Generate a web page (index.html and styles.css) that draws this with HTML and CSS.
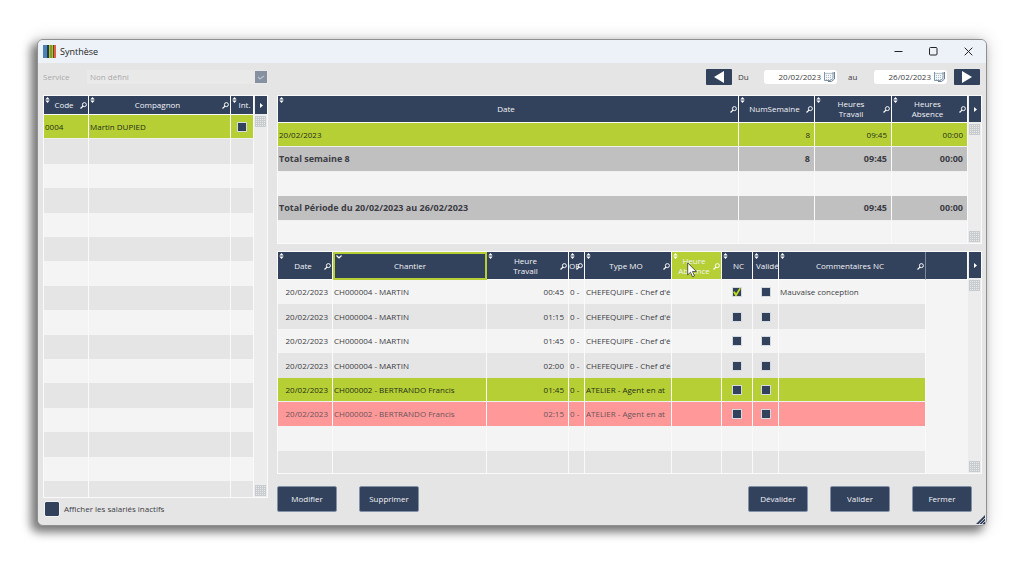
FILE: index.html
```html
<!DOCTYPE html>
<html lang="fr">
<head>
<meta charset="utf-8">
<title>Synthèse</title>
<link rel="stylesheet" href="styles.css">
</head>
<body>
<svg class="defs" aria-hidden="true">
  <symbol id="sort" viewBox="0 0 5 7"><path d="M2.5 0 5 3H0zM2.5 7 0 4h5z" fill="#fff"/></symbol>
  <symbol id="down" viewBox="0 0 6 4"><path d="M.5.5 3 3 5.5.5" fill="none" stroke="#fff" stroke-width="1.2"/></symbol>
  <symbol id="find" viewBox="0 0 8 8"><circle cx="5" cy="3" r="2.3" fill="none" stroke="#fff" stroke-width="1.1"/><path d="M3.4 4.7.6 7.4" stroke="#fff" stroke-width="1.4"/></symbol>
  <symbol id="cal" viewBox="0 0 11 11"><path d="M.5 1v8.500h6l2.500-2V1" fill="#f3f6f9" stroke="#8295a6"/><path d="M.5 2.500h9" stroke="#8295a6" stroke-dasharray="1 1"/><path d="M2.500 4v5M4.500 4v5M6.500 4v5" stroke="#a9bccb" stroke-dasharray="1 1"/><path d="M10.500 1v7l-3 2.500H4" fill="none" stroke="#6f8193"/></symbol>
  <symbol id="grip" viewBox="0 0 11 11"><path d="M0 0h11v11H0z" fill="#c9cccf"/><path d="M1 1.500h9M1 3.500h9M1 5.500h9M1 7.500h9M1 9.500h9" stroke="#e9e9e9" stroke-dasharray="1 1"/></symbol>
</svg>

<div class="window">
  <header class="titlebar">
    <svg class="logo" viewBox="0 0 13 13"><path d="M0 0h5v13H0z" fill="#4a82b8"/><path d="M4 0h2v13H4z" fill="#26384a"/><path d="M6 0h4v13H6z" fill="#a9c52f"/><path d="M7.500 0h1v13h-1z" fill="#5c7426"/><path d="M10 0h1v13h-1z" fill="#5b4a2c"/><path d="M11 0h2v13h-2z" fill="#e2604c"/></svg>
    <h1 class="title">Synthèse</h1>
    <button class="win-btn" aria-label="Réduire"><svg viewBox="0 0 9 9"><path d="M.5 4.500h8" stroke="#222"/></svg></button>
    <button class="win-btn" aria-label="Agrandir"><svg viewBox="0 0 9 9"><rect x=".5" y=".5" width="7.500" height="7.500" rx="1" fill="none" stroke="#222"/></svg></button>
    <button class="win-btn" aria-label="Fermer la fenêtre"><svg viewBox="0 0 9 9"><path d="m.7.7 7.600 7.600M8.300.7.7 8.300" stroke="#222"/></svg></button>
  </header>

  <main class="client">
    <section class="side">
      <div class="service">
        <label for="service">Service</label>
        <div class="select-wrap">
          <select id="service" disabled><option>Non défini</option></select>
          <svg class="select-arrow" viewBox="0 0 12 12"><path d="M0 0h12v12H0z" fill="#8591a1"/><path d="m3 6 2 2 4-3" fill="none" stroke="#b9c1ca" stroke-width="1.300"/></svg>
        </div>
      </div>
      <div class="panel">
        <table class="people">
          <colgroup><col class="c-code"><col><col class="c-int"></colgroup>
          <thead><tr>
            <th><svg class="sort"><use href="#sort"/></svg>Code<svg class="find"><use href="#find"/></svg></th>
            <th><svg class="sort"><use href="#sort"/></svg>Compagnon<svg class="find"><use href="#find"/></svg></th>
            <th class="tight-end"><svg class="sort"><use href="#sort"/></svg>Int.</th>
          </tr></thead>
          <tbody>
            <tr class="selected"><td>0004</td><td>Martin DUPIED</td><td class="mid"><input type="checkbox" class="box" aria-label="Intérimaire"></td></tr>
            <tr><td></td><td></td><td></td></tr><tr><td></td><td></td><td></td></tr>
            <tr><td></td><td></td><td></td></tr><tr><td></td><td></td><td></td></tr>
            <tr><td></td><td></td><td></td></tr><tr><td></td><td></td><td></td></tr>
            <tr><td></td><td></td><td></td></tr><tr><td></td><td></td><td></td></tr>
            <tr><td></td><td></td><td></td></tr><tr><td></td><td></td><td></td></tr>
            <tr><td></td><td></td><td></td></tr><tr><td></td><td></td><td></td></tr>
            <tr><td></td><td></td><td></td></tr><tr><td></td><td></td><td></td></tr>
            <tr class="cut"><td></td><td></td><td></td></tr>
          </tbody>
        </table>
        <div class="scroll">
          <button class="corner small" aria-label="Colonnes"><svg viewBox="0 0 3 5"><path d="M0 0 3 2.500 0 5z" fill="#fff"/></svg></button>
          <svg class="grip"><use href="#grip"/></svg><svg class="grip last"><use href="#grip"/></svg>
        </div>
      </div>
      <label class="inactive"><input type="checkbox" class="big-box">Afficher les salariés inactifs</label>
    </section>

    <section class="content">
      <div class="period">
        <button class="step" aria-label="Période précédente"><svg viewBox="0 0 10 12"><path d="M10 0v12L0 6z" fill="#fff"/></svg></button>
        <label for="from" class="du">Du</label>
        <div class="date"><input id="from" type="text" value="20/02/2023"><svg><use href="#cal"/></svg></div>
        <label for="to" class="au">au</label>
        <div class="date"><input id="to" type="text" value="26/02/2023"><svg><use href="#cal"/></svg></div>
        <button class="step next" aria-label="Période suivante"><svg viewBox="0 0 10 12"><path d="M0 0v12l10-6z" fill="#fff"/></svg></button>
      </div>

      <div class="panel">
        <table class="totals">
          <colgroup><col><col class="c-week"><col class="c-hours"><col class="c-week"></colgroup>
          <thead><tr>
            <th><svg class="sort"><use href="#sort"/></svg>Date<svg class="find"><use href="#find"/></svg></th>
            <th><svg class="sort"><use href="#sort"/></svg>NumSemaine<svg class="find"><use href="#find"/></svg></th>
            <th><svg class="sort"><use href="#sort"/></svg>Heures<br>Travail<svg class="find"><use href="#find"/></svg></th>
            <th><svg class="sort"><use href="#sort"/></svg>Heures<br>Absence<svg class="find"><use href="#find"/></svg></th>
          </tr></thead>
          <tbody>
            <tr class="selected"><td>20/02/2023</td><td class="num">8</td><td class="num">09:45</td><td class="num">00:00</td></tr>
            <tr class="sum"><td>Total semaine 8</td><td class="num">8</td><td class="num">09:45</td><td class="num">00:00</td></tr>
            <tr class="light"><td></td><td></td><td></td><td></td></tr>
            <tr class="sum"><td>Total Période du 20/02/2023 au 26/02/2023</td><td></td><td class="num">09:45</td><td class="num">00:00</td></tr>
            <tr class="light cut"><td></td><td></td><td></td><td></td></tr>
          </tbody>
        </table>
        <div class="scroll">
          <button class="corner" aria-label="Colonnes"><svg viewBox="0 0 3 5"><path d="M0 0 3 2.500 0 5z" fill="#fff"/></svg></button>
          <svg class="grip"><use href="#grip"/></svg><svg class="grip last"><use href="#grip"/></svg>
        </div>
      </div>

      <div class="panel">
        <table class="details">
          <colgroup><col class="c-date"><col class="c-site"><col class="c-hour"><col class="c-of"><col class="c-type"><col class="c-abs"><col class="c-nc"><col class="c-ok"><col><col class="c-rest"></colgroup>
          <thead><tr>
            <th><svg class="sort"><use href="#sort"/></svg>Date<svg class="find"><use href="#find"/></svg></th>
            <th class="focused"><svg class="down"><use href="#down"/></svg>Chantier</th>
            <th><svg class="sort"><use href="#sort"/></svg>Heure<br>Travail<svg class="find"><use href="#find"/></svg></th>
            <th class="tight"><svg class="sort"><use href="#sort"/></svg>OF<svg class="find"><use href="#find"/></svg></th>
            <th><svg class="sort"><use href="#sort"/></svg>Type MO<svg class="find"><use href="#find"/></svg></th>
            <th class="hovered"><svg class="sort"><use href="#sort"/></svg>Heure<br>Absence<svg class="find"><use href="#find"/></svg>
              <svg class="cursor" viewBox="0 0 10 16"><path d="M.7.9v12l2.800-2.600 2 4.500 2-.9-2-4.400h3.800z" fill="#fff" stroke="#333" stroke-width=".8"/></svg></th>
            <th class="tight-end"><svg class="sort"><use href="#sort"/></svg>NC</th>
            <th class="tight-end"><svg class="sort"><use href="#sort"/></svg>Validé</th>
            <th><svg class="sort"><use href="#sort"/></svg>Commentaires NC<svg class="find"><use href="#find"/></svg></th>
            <th></th>
          </tr></thead>
          <tbody>
            <tr><td class="num">20/02/2023</td><td>CH000004 - MARTIN</td><td class="num">00:45</td><td>0 -</td><td>CHEFEQUIPE - Chef d'é</td><td></td><td class="mid"><input type="checkbox" class="box" aria-label="NC" checked></td><td class="mid"><input type="checkbox" class="box" aria-label="Validé"></td><td>Mauvaise conception</td><td></td></tr>
            <tr><td class="num">20/02/2023</td><td>CH000004 - MARTIN</td><td class="num">01:15</td><td>0 -</td><td>CHEFEQUIPE - Chef d'é</td><td></td><td class="mid"><input type="checkbox" class="box" aria-label="NC"></td><td class="mid"><input type="checkbox" class="box" aria-label="Validé"></td><td></td><td></td></tr>
            <tr><td class="num">20/02/2023</td><td>CH000004 - MARTIN</td><td class="num">01:45</td><td>0 -</td><td>CHEFEQUIPE - Chef d'é</td><td></td><td class="mid"><input type="checkbox" class="box" aria-label="NC"></td><td class="mid"><input type="checkbox" class="box" aria-label="Validé"></td><td></td><td></td></tr>
            <tr><td class="num">20/02/2023</td><td>CH000004 - MARTIN</td><td class="num">02:00</td><td>0 -</td><td>CHEFEQUIPE - Chef d'é</td><td></td><td class="mid"><input type="checkbox" class="box" aria-label="NC"></td><td class="mid"><input type="checkbox" class="box" aria-label="Validé"></td><td></td><td></td></tr>
            <tr class="selected"><td class="num">20/02/2023</td><td>CH000002 - BERTRANDO Francis</td><td class="num">01:45</td><td>0 -</td><td>ATELIER - Agent en at</td><td></td><td class="mid"><input type="checkbox" class="box" aria-label="NC"></td><td class="mid"><input type="checkbox" class="box" aria-label="Validé"></td><td></td><td></td></tr>
            <tr class="alert"><td class="num">20/02/2023</td><td>CH000002 - BERTRANDO Francis</td><td class="num">02:15</td><td>0 -</td><td>ATELIER - Agent en at</td><td></td><td class="mid"><input type="checkbox" class="box" aria-label="NC"></td><td class="mid"><input type="checkbox" class="box" aria-label="Validé"></td><td></td><td></td></tr>
            <tr><td></td><td></td><td></td><td></td><td></td><td></td><td></td><td></td><td></td><td></td></tr>
            <tr class="cut"><td></td><td></td><td></td><td></td><td></td><td></td><td></td><td></td><td></td><td></td></tr>
          </tbody>
        </table>
        <div class="scroll">
          <button class="corner" aria-label="Colonnes"><svg viewBox="0 0 3 5"><path d="M0 0 3 2.500 0 5z" fill="#fff"/></svg></button>
          <svg class="grip"><use href="#grip"/></svg><svg class="grip last"><use href="#grip"/></svg>
        </div>
      </div>

      <footer class="actions">
        <div class="group">
          <button class="action">Modifier</button>
          <button class="action">Supprimer</button>
        </div>
        <div class="group">
          <button class="action">Dévalider</button>
          <button class="action">Valider</button>
          <button class="action">Fermer</button>
        </div>
      </footer>
    </section>
  </main>
  <svg class="resize" viewBox="0 0 9 9"><path d="M9 0v9H0z" fill="#32415c"/><path d="M3 9 9 3M6 9l3-3" stroke="#e5e5e5" stroke-width=".8"/></svg>
</div>
</body>
</html>
```
FILE: styles.css
```css
* { box-sizing: border-box; }
body {
  margin: 0;
  padding: 39px 37px;
  background: #fff;
  color: #3c3c44;
  font: 8px/10px "Open Sans", "Noto Sans", sans-serif;
}
.defs { position: absolute; width: 0; height: 0; }
button, input, select { font: inherit; color: inherit; margin: 0; padding: 0; border: 0; }
svg { display: block; }

.window {
  position: relative;
  background: #e5e5e5;
  border: 1px solid #8f8f8f;
  border-radius: 6px;
  box-shadow: -5px 5px 10px 1px rgba(0, 0, 0, .5), 0 0 16px 3px rgba(0, 0, 0, .1);
}
.titlebar {
  display: flex;
  align-items: center;
  height: 23px;
  padding-left: 5px;
  background: #edf2f8;
  border-radius: 5px 5px 0 0;
}
.logo { width: 13px; height: 13px; }
.title { flex: 1; margin: 0 0 0 4px; font-size: 9px; line-height: 12px; font-weight: 400; color: #222; }
.win-btn { width: 35px; height: 22px; background: none; display: flex; align-items: center; justify-content: center; }
.win-btn svg { width: 9px; height: 9px; }

.client { display: flex; gap: 9px; padding: 5px 4px 9px 5px; }
.side { width: 225px; }
.content { flex: 1; min-width: 0; }

.service { display: flex; align-items: center; height: 17px; margin-bottom: 10px; color: #a9a9a9; }
.service label { width: 44px; }
.select-wrap { position: relative; flex: 1; }
.select-wrap select {
  display: block;
  width: 100%;
  height: 14px;
  padding-left: 3px;
  appearance: none;
  background: #e9e9e9;
  color: #a9a9a9;
  opacity: 1;
}
.select-arrow { position: absolute; top: 1px; right: 1px; width: 12px; height: 12px; }

.period { display: flex; align-items: center; justify-content: flex-end; height: 17px; margin-bottom: 10px; padding-right: 2px; }
.step { width: 26px; height: 16px; background: #32415c; border-radius: 1px; display: flex; align-items: center; justify-content: center; }
.step svg { width: 10px; height: 12px; }
.next { margin-left: 7px; }
.du { width: 26px; margin-left: 6px; }
.au { width: 26px; margin-left: 11px; }
.date { display: flex; align-items: center; width: 73px; height: 14px; padding-right: 2px; background: #fff; border-radius: 3px; }
.date input { flex: 1; min-width: 0; height: 12px; background: none; text-align: right; }
.date svg { width: 11px; height: 11px; margin-left: 3px; }

.panel { display: flex; border: 1px solid #fafafa; background: #f4f4f4; }
.panel + .panel { margin-top: 7px; }
table { flex: 1; width: 0; table-layout: fixed; border-collapse: separate; border-spacing: 0; }
th {
  position: relative;
  height: 27px;
  padding: 0 10px 0 6px;
  background: #32415c;
  color: #f2f4f7;
  font-weight: 400;
  border-right: 1px solid #fafafa;
  border-bottom: 1px solid #fafafa;
}
.people th { height: 19px; }
.details th { height: 28px; }
.details th:nth-child(9) { border-right-color: #7c8799; }
th.tight-end { padding: 0 0 0 5px; white-space: nowrap; }
th.tight { padding: 0; text-align: left; white-space: nowrap; }
.details th.tight-end { padding-left: 3px; }
th.focused { padding: 0; border: 2px solid #b6cf35; }
th.hovered { background: #b6cf35; padding: 0 5px 0 0; }
.sort { position: absolute; top: 1px; left: 1px; width: 5px; height: 6px; }
.down { position: absolute; top: 1px; left: 1px; width: 6px; height: 4px; }
.find { position: absolute; top: 50%; right: 1px; width: 7px; height: 7px; margin-top: -3px; }
.cursor { position: absolute; top: 10px; left: 15px; width: 10px; height: 16px; }

td {
  height: 24px;
  padding: 0 0 0 1px;
  overflow: hidden;
  white-space: nowrap;
  border-right: 1px solid #fafafa;
}
tr:nth-child(5n+2) td, tr:nth-child(5n+4) td { height: 25px; }
tbody tr { background: #f4f4f4; }
tbody tr:nth-child(even) { background: #e5e5e5; }
tbody tr.light { background: #f4f4f4; }
tbody tr.sum { background: #c0c0c0; font-size: 9px; font-weight: 700; }
tbody tr.selected { background: #b6cf35; color: #26301a; }
tbody tr.alert { background: #ff9898; color: #6b5558; }
tr.selected td, tr.sum td { border-bottom: 1px solid #f0f0f0; }
tr.cut td { height: 22px; }
.people tr.cut td { height: 16px; }
.details td:last-child { background: #f4f4f4; border: 0; }
td.num { padding: 0 4px 0 0; text-align: right; }
td.mid { padding: 0; text-align: center; }

.c-code { width: 45px; }
.c-int { width: 23px; }
.c-week { width: 76px; }
.c-hours { width: 77px; }
.c-date { width: 55px; }
.c-site { width: 154px; }
.c-hour { width: 82px; }
.c-of { width: 16px; }
.c-type { width: 87px; }
.c-abs { width: 50px; }
.c-nc { width: 31px; }
.c-ok { width: 26px; }
.c-rest { width: 42px; }

.box {
  appearance: none;
  display: block;
  width: 10px;
  height: 10px;
  margin: 0 auto;
  background: #32415c;
  border: 1px solid #d5dae0;
}
.box:checked::before {
  content: "";
  display: block;
  width: 8px;
  height: 8px;
  background: #c3dc1e;
  clip-path: polygon(0 50%, 20% 40%, 40% 65%, 80% 0, 100% 5%, 45% 100%, 30% 100%);
}

.scroll { display: flex; flex-direction: column; width: 13px; padding-left: 1px; background: #ececec; }
.corner { width: 12px; height: 26px; margin-bottom: 2px; background: #32415c; display: flex; align-items: center; justify-content: center; }
.corner.small { height: 18px; }
.corner svg { width: 3px; height: 5px; }
.grip { width: 11px; height: 11px; }
.grip.last { margin-top: auto; margin-bottom: 1px; }

.inactive { display: flex; align-items: center; gap: 5px; margin: 4px 0 0 2px; color: #3c3c44; }
.big-box { appearance: none; width: 14px; height: 14px; background: #32415c; border-radius: 1px; outline: 1px solid #f2f2f2; }

.actions { display: flex; justify-content: space-between; margin-top: 12px; padding-right: 10px; }
.group { display: flex; gap: 22px; }
.action { width: 60px; height: 26px; background: #32415c; color: #f2f4f7; border: 1px solid #8391a6; border-radius: 2px; }
.resize { position: absolute; right: 1px; bottom: 1px; width: 9px; height: 9px; }
```
